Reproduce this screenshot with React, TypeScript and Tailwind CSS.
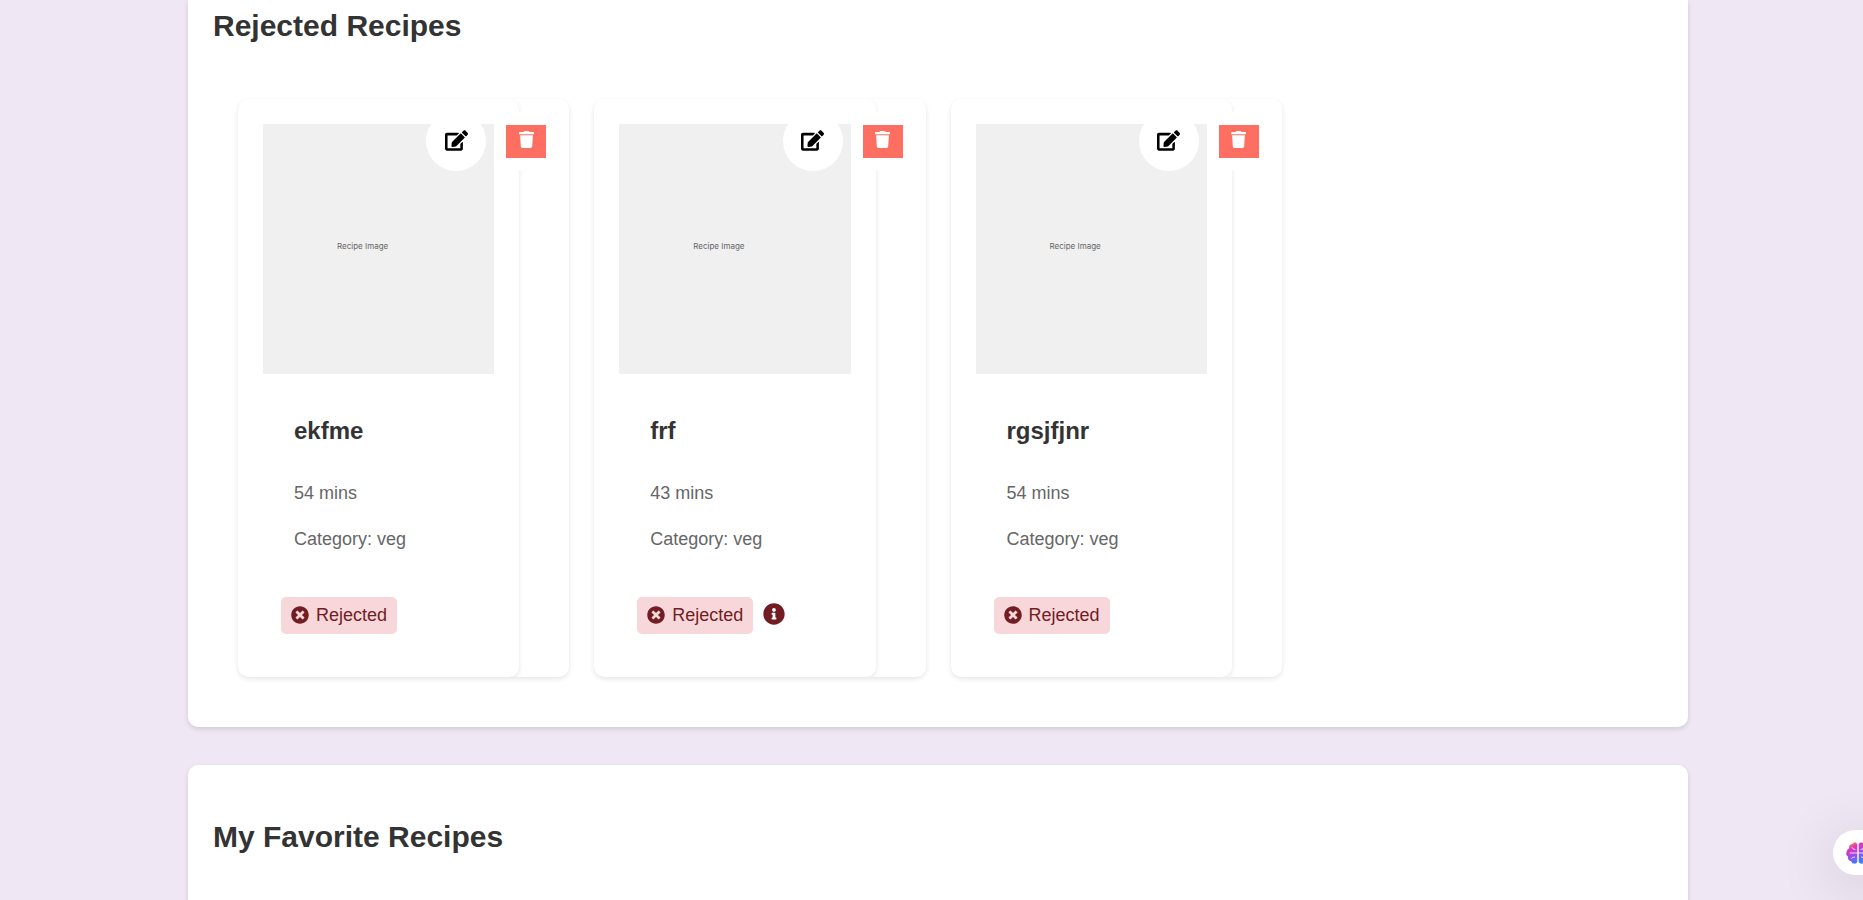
import { FaEdit, FaInfoCircle, FaTimesCircle, FaTrash } from "react-icons/fa";

interface Recipe {
  name: string;
  minutes: number;
  category: string;
  hasReason?: boolean;
}

const rejected: Recipe[] = [
  { name: "ekfme", minutes: 54, category: "veg" },
  { name: "frf", minutes: 43, category: "veg", hasReason: true },
  { name: "rgsjfjnr", minutes: 54, category: "veg" },
];

function RecipeCard({ recipe }: { recipe: Recipe }) {
  return (
    <article className="relative overflow-hidden rounded-[10px] bg-white pr-[50px] shadow-[0_2px_5px_rgba(0,0,0,0.1)]">
      <div className="rounded-[10px] bg-white p-[25px] pb-[43px] shadow-[0_2px_5px_rgba(0,0,0,0.1)]">
        <div className="flex h-[250px] items-center bg-[#f0f0f0] pl-[74px] font-[Inter,sans-serif] text-[8px] leading-3 text-[#666]">
          <span className="pb-1.5">Recipe Image</span>
        </div>
        <div className="px-[31px] pt-[43px]">
          <h3 className="text-2xl leading-7 font-bold text-[#333]">{recipe.name}</h3>
          <p className="mt-9 text-lg leading-6 text-[#666]">{recipe.minutes} mins</p>
          <p className="mt-[22px] text-lg leading-6 text-[#666]">Category: {recipe.category}</p>
        </div>
        <div className="mt-[46px] ml-[18px] flex items-center gap-2.5 text-[#721c24]">
          <span className="flex h-[37px] items-center gap-[7px] rounded-[5px] bg-[#f8d7da] px-2.5 pb-0.5 text-lg">
            <FaTimesCircle size={18} aria-hidden="true" />
            Rejected
          </span>
          {recipe.hasReason && (
            <button type="button" aria-label="Rejection reason" className="pb-[3px]">
              <FaInfoCircle size={22} />
            </button>
          )}
        </div>
      </div>
      <div className="absolute top-3 right-[13px] flex gap-2.5">
        <button
          type="button"
          aria-label="Edit recipe"
          className="flex size-[60px] items-center justify-center rounded-full bg-white pb-0.5 text-black"
        >
          <FaEdit size={23} />
        </button>
        <div className="flex size-[60px] items-center justify-center rounded-full bg-white">
          <button
            type="button"
            aria-label="Delete recipe"
            className="flex h-[33px] w-10 justify-center bg-[#ff6f61] pt-1.5 text-white"
          >
            <FaTrash size={17} />
          </button>
        </div>
      </div>
    </article>
  );
}

function BrainIcon() {
  return (
    <svg width="24" height="24" viewBox="0 0 24 24" fill="none" aria-hidden="true">
      <defs>
        <linearGradient id="brain" x1="4" y1="1" x2="14" y2="20" gradientUnits="userSpaceOnUse">
          <stop offset="0" stopColor="#ff9a2e" />
          <stop offset="0.3" stopColor="#e233b8" />
          <stop offset="0.65" stopColor="#9a4bf0" />
          <stop offset="1" stopColor="#3f7cff" />
        </linearGradient>
      </defs>
      <path
        d="M11.3 3.4C10.6 1 7.3.8 6.3 3C4 3 2.6 5 3.2 7.2C1.5 8.2.8 9.6.6 11C-.4 12.5.4 14.5 2 15.4C1.3 18 3 20 5.2 20.2C6 23.4 10.5 23.5 11.3 20.8Z"
        fill="url(#brain)"
      />
      <path
        d="M12.7 3.4C13.4 1 16.7.8 17.7 3C20 3 21.4 5 20.8 7.2C22.5 8.2 23.2 9.6 23.4 11C24.4 12.5 23.6 14.5 22 15.4C22.7 18 21 20 18.8 20.2C18 23.4 13.5 23.5 12.7 20.8Z"
        fill="url(#brain)"
      />
      <path
        d="M4 12H11M6 6.5Q6.5 8.5 9 8.5M5.5 17.5Q6 16 8.5 16M13 12H21M18 6.5Q17.5 8.5 15 8.5M18.5 17.5Q18 16 15.5 16"
        stroke="#fff"
        strokeOpacity="0.8"
        strokeWidth="1"
        strokeLinecap="round"
      />
    </svg>
  );
}

export default function App() {
  return (
    <div className="h-screen overflow-hidden bg-[#efe7f3] pl-[13px] font-['Liberation_Sans',Arial,sans-serif]">
      <main className="mx-auto flex max-w-[1500px] flex-col gap-[38px]">
        <section className="rounded-b-[10px] bg-white px-[25px] pt-2 pb-[50px] shadow-[0_2px_5px_rgba(0,0,0,0.13)]">
          <h2 className="text-[30px] leading-9 font-bold text-[#333]">Rejected Recipes</h2>
          <div className="mt-[55px] grid grid-cols-4 gap-[25px] px-[25px]">
            {rejected.map((recipe) => (
              <RecipeCard key={recipe.name} recipe={recipe} />
            ))}
          </div>
        </section>
        <section className="rounded-[10px] bg-white px-[25px] pt-[54px] pb-40 shadow-[0_2px_5px_rgba(0,0,0,0.13)]">
          <h2 className="text-[30px] leading-9 font-bold text-[#333]">My Favorite Recipes</h2>
        </section>
      </main>
      <button
        type="button"
        aria-label="Open assistant"
        className="fixed -right-5 bottom-[25px] flex h-[45px] w-[50px] items-center rounded-l-full bg-white pl-[13px] shadow-[0_10px_60px_rgba(0,0,0,0.16)]"
      >
        <BrainIcon />
      </button>
    </div>
  );
}
